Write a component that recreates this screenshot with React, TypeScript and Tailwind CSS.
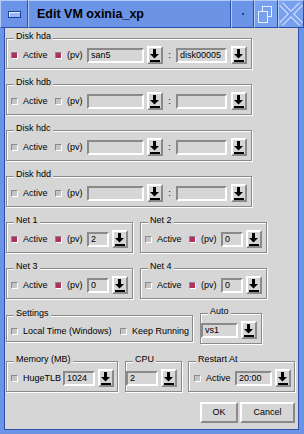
import React from "react";

// ----------------------------------------------------------------------------

const Check = ({ on, className = "" }: { on?: boolean; className?: string }) => {
  return (
    <span
      className={`block w-[7px] h-[7px] shrink-0 border border-t-[#8a8a8a] border-l-[#8a8a8a] border-b-white border-r-white ${
        on ? "bg-[#b03060]" : "bg-[#c4c4c4]"
      } ${className}`}
    />
  );
};

const Drop = ({ className = "" }: { className?: string }) => {
  return (
    <span
      className={`flex items-center justify-center w-[16px] h-[18px] shrink-0 border-2 border-t-white border-l-white border-b-[#8a8a8a] border-r-[#8a8a8a] ${className}`}
    >
      <svg width="10" height="14" viewBox="0 0 10 14">
        <rect x="3" y="1" width="3" height="5" fill="#000" />
        <polygon points="0,6 9,6 4.5,10.5" fill="#000" />
        <rect x="0" y="12" width="10" height="2" fill="#000" />
      </svg>
    </span>
  );
};

const Entry = ({ w, value }: { w: string; value?: string }) => {
  return (
    <span
      className={`flex items-center h-[15px] shrink-0 ${w} border-2 border-t-[#8a8a8a] border-l-[#8a8a8a] border-b-white border-r-white pl-[2px] whitespace-nowrap overflow-hidden`}
    >
      {value}
    </span>
  );
};

const Frame = ({
  label,
  className = "",
  children,
}: {
  label: string;
  className?: string;
  children: React.ReactNode;
}) => {
  return (
    <div
      className={`relative shrink-0 border border-[#8a8a8a] shadow-[inset_1px_1px_0_#fff,1px_1px_0_#fff] ${className}`}
    >
      <span className="absolute -top-[8px] left-[7px] px-[2px] bg-[#d6d6d6] leading-[11px] whitespace-nowrap">
        {label}
      </span>
      <div className="flex items-center h-[18px]">{children}</div>
    </div>
  );
};

const DiskFrame = ({
  label,
  active,
  pv,
  pool,
  disk,
}: {
  label: string;
  active?: boolean;
  pv?: boolean;
  pool?: string;
  disk?: string;
}) => {
  return (
    <Frame label={label} className="w-[246px] pl-[4px] pt-[7px] pb-[4px]">
      <Check on={active} />
      <span className="ml-[5px] w-[32px]">Active</span>
      <Check on={pv} />
      <span className="ml-[5px] w-[20px]">(pv)</span>
      <Entry w="w-[57px]" value={pool} />
      <Drop className="ml-[3px]" />
      <span className="w-[13px] text-center">:</span>
      <Entry w="w-[51px]" value={disk} />
      <Drop className="ml-[4px]" />
    </Frame>
  );
};

const NetFrame = ({
  label,
  active,
  value,
  className = "",
}: {
  label: string;
  active?: boolean;
  value: string;
  className?: string;
}) => {
  return (
    <Frame label={label} className={`w-[127px] pl-[4px] pt-[7px] pb-[4px] ${className}`}>
      <Check on={active} />
      <span className="ml-[5px] w-[32px]">Active</span>
      <Check on />
      <span className="ml-[5px] w-[20px]">(pv)</span>
      <Entry w="w-[22px]" value={value} />
      <Drop className="ml-[3px]" />
    </Frame>
  );
};

const Button = ({ text, className = "" }: { text: string; className?: string }) => {
  return (
    <span
      className={`flex items-center justify-center h-[21px] border-2 border-t-white border-l-white border-b-[#8a8a8a] border-r-[#8a8a8a] ${className}`}
    >
      {text}
    </span>
  );
};

const App = () => {
  return (
    <div className="w-[304px] h-[434px] flex flex-col bg-[#6b93e6] text-black text-[9px] leading-[11px] font-['Liberation_Sans',Arial,sans-serif]">
      {/* title bar */}
      <div className="flex h-[28px] shrink-0">
        <div className="w-[28px] flex items-center justify-center border border-t-[#b4cbf7] border-l-[#b4cbf7] border-b-[#2b4ea8] border-r-[#2b4ea8]">
          <span className="w-[13px] h-[7px] border border-[#1f3f99] bg-[#9ab7f4] shadow-[inset_1px_1px_0_#e8f0ff]" />
        </div>
        <div className="flex-1 flex items-center pl-[8px] border border-t-[#b4cbf7] border-l-[#b4cbf7] border-b-[#2b4ea8] border-r-[#2b4ea8] font-bold text-[12.5px]">
          Edit VM oxinia_xp
        </div>
        <div className="w-[23px] flex items-center justify-center border border-t-[#b4cbf7] border-l-[#b4cbf7] border-b-[#2b4ea8] border-r-[#2b4ea8]">
          <span className="w-[2px] h-[2px] bg-[#1f3f99]" />
        </div>
        <div className="w-[24px] flex items-center justify-center bg-[#77a0ee] border border-t-[#b4cbf7] border-l-[#b4cbf7] border-b-[#2b4ea8] border-r-[#2b4ea8]">
          <svg width="22" height="26" viewBox="0 0 22 26">
            <rect x="7.5" y="5.5" width="9" height="10" fill="none" stroke="#e6eeff" />
            <rect x="3.5" y="10.5" width="9" height="11" fill="#77a0ee" stroke="#e6eeff" />
          </svg>
        </div>
        <div className="w-[26px] flex items-center justify-center bg-[#77a0ee] border border-t-[#b4cbf7] border-l-[#b4cbf7] border-b-[#2b4ea8] border-r-[#2b4ea8]">
          <svg width="24" height="26" viewBox="0 0 24 26">
            <path d="M2 3 L22 23 M22 3 L2 23" stroke="#dbe6fb" strokeWidth="5" />
            <path d="M2 3 L22 23 M22 3 L2 23" stroke="#77a0ee" strokeWidth="3" />
          </svg>
        </div>
      </div>

      {/* body */}
      <div className="flex-1 flex pl-[4px] pr-[5px] pb-[4px]">
        <div className="flex-1 flex flex-col bg-[#d6d6d6] border border-t-0 border-[#2b4ea8] pl-[1px] pt-[10px]">
          <DiskFrame label="Disk hda" active pv pool="san5" disk="disk00005" />
          <div className="mt-[15px]">
            <DiskFrame label="Disk hdb" />
          </div>
          <div className="mt-[15px]">
            <DiskFrame label="Disk hdc" />
          </div>
          <div className="mt-[15px]">
            <DiskFrame label="Disk hdd" />
          </div>

          <div className="flex mt-[15px]">
            <NetFrame label="Net 1" active value="2" />
            <NetFrame label="Net 2" value="0" className="ml-[7px]" />
          </div>
          <div className="flex mt-[15px]">
            <NetFrame label="Net 3" value="0" />
            <NetFrame label="Net 4" value="0" className="ml-[7px]" />
          </div>

          <div className="flex items-start mt-[14px]">
            <Frame label="Settings" className="w-[187px] mt-[2px] pl-[4px] pt-[6px] pb-[1px]">
              <Check />
              <span className="ml-[5px] w-[97px] whitespace-nowrap">Local Time (Windows)</span>
              <Check />
              <span className="ml-[5px] whitespace-nowrap">Keep Running</span>
            </Frame>
            <Frame label="Auto" className="w-[62px] ml-[7px] pt-[7px] pb-[4px]">
              <Entry w="w-[37px]" value="vs1" />
              <Drop className="ml-[3px]" />
            </Frame>
          </div>

          <div className="flex mt-[17px]">
            <Frame label="Memory (MB)" className="w-[112px] pl-[4px] pt-[7px] pb-[4px]">
              <Check />
              <span className="ml-[5px] w-[40px]">HugeTLB</span>
              <Entry w="w-[32px]" value="1024" />
              <Drop className="ml-[3px]" />
            </Frame>
            <Frame label="CPU" className="w-[57px] ml-[7px] pt-[7px] pb-[4px]">
              <Entry w="w-[32px]" value="2" />
              <Drop className="ml-[3px]" />
            </Frame>
            <Frame label="Restart At" className="w-[107px] ml-[6px] pl-[5px] pt-[7px] pb-[4px]">
              <Check />
              <span className="ml-[5px] w-[29px]">Active</span>
              <Entry w="w-[37px]" value="20:00" />
              <Drop className="ml-[3px]" />
            </Frame>
          </div>

          <div className="flex justify-end gap-[2px] mt-[10px] pr-[3px]">
            <Button text="OK" className="w-[38px]" />
            <Button text="Cancel" className="w-[55px]" />
          </div>
        </div>
      </div>
    </div>
  );
};

export default App;
